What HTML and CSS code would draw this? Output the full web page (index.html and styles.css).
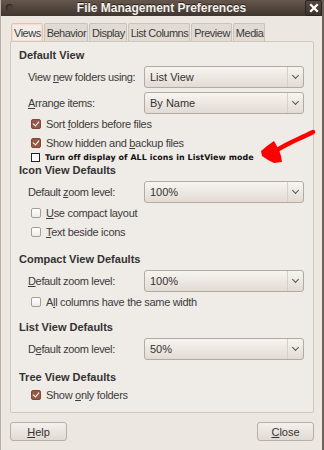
FILE: index.html
```html
<!DOCTYPE html>
<html>
<head>
  <meta charset="utf-8" />
  <title>File Management Preferences</title>
  <link rel="stylesheet" href="styles.css">
</head>
<body>
<div class="window">
  <div class="titlebar">
    <span class="menu-dot"></span>
    <span class="title">File Management Preferences</span>
    <span class="close-btn">
      <svg width="10" height="10" viewBox="0 0 10 10"><path d="M2 2 L8 8 M8 2 L2 8" stroke="#fff" stroke-width="2.2" stroke-linecap="square"/></svg>
    </span>
  </div>

  <div class="content">
    <div class="tabs">
      <div class="tab active">Views</div>
      <div class="tab">Behavior</div>
      <div class="tab">Display</div>
      <div class="tab">List Columns</div>
      <div class="tab">Preview</div>
      <div class="tab">Media</div>
    </div>

    <div class="panel">
      <h2 class="heading">Default View</h2>
      <div class="row combo-row">
        <span class="label">View <u>n</u>ew folders using:</span>
        <div class="combo"><span>List View</span><i class="combo-arrow"></i></div>
      </div>
      <div class="row combo-row gap">
        <span class="label"><u>A</u>rrange items:</span>
        <div class="combo"><span>By Name</span><i class="combo-arrow"></i></div>
      </div>
      <label class="check-row"><span class="box checked"></span><span>Sort <u>f</u>olders before files</span></label>
      <label class="check-row"><span class="box checked"></span><span>Show hidden and <u>b</u>ackup files</span></label>
      <label class="hack-row"><span class="hack-box"></span><span>Turn off display of ALL icons in ListView mode</span></label>

      <h2 class="heading h-icon">Icon View Defaults</h2>
      <div class="row combo-row">
        <span class="label">Default <u>z</u>oom level:</span>
        <div class="combo"><span>100%</span><i class="combo-arrow"></i></div>
      </div>
      <label class="check-row"><span class="box"></span><span><u>U</u>se compact layout</span></label>
      <label class="check-row"><span class="box"></span><span><u>T</u>ext beside icons</span></label>

      <h2 class="heading h-compact">Compact View Defaults</h2>
      <div class="row combo-row">
        <span class="label"><u>D</u>efault zoom level:</span>
        <div class="combo"><span>100%</span><i class="combo-arrow"></i></div>
      </div>
      <label class="check-row"><span class="box"></span><span>A<u>l</u>l columns have the same width</span></label>

      <h2 class="heading h-list">List View Defaults</h2>
      <div class="row combo-row">
        <span class="label">D<u>e</u>fault zoom level:</span>
        <div class="combo"><span>50%</span><i class="combo-arrow"></i></div>
      </div>

      <h2 class="heading h-tree">Tree View Defaults</h2>
      <label class="check-row last"><span class="box checked"></span><span>Show <u>o</u>nly folders</span></label>
    </div>

    <div class="buttons">
      <button class="btn"><u>H</u>elp</button>
      <button class="btn"><u>C</u>lose</button>
    </div>
  </div>

  <!-- hand drawn annotation -->
  <svg class="annotation" width="324" height="450" viewBox="0 0 324 450">
    <path d="M312 132 C300 138 292 141 283 146 C279 148 276 150 272 153" fill="none" stroke="#f00" stroke-width="4.5" stroke-linecap="round"/>
    <path d="M273 141 L266 146 L260 151 L261 156 L267 160 L273 163 L281 162 L280 156 L278 150 Z" fill="#f00"/>
  </svg>
</div>
</body>
</html>
```

FILE: styles.css
```css
body {
  margin: 0;
  padding: 0;
  font-family: "Liberation Sans", Arial, sans-serif;
  font-size: 11px;
  color: #3c3c3c;
}
.window {
  position: relative;
  width: 324px;
  height: 450px;
  background: #ece7e1;
  box-sizing: border-box;
  border-right: 2px solid #6a625b;
  border-left: 1px solid #b9b1a8;
  overflow: hidden;
}
.titlebar {
  height: 16px;
  background: linear-gradient(#65574c, #3f362f);
  display: flex;
  align-items: center;
  justify-content: center;
  position: relative;
}
.menu-dot {
  position: absolute;
  left: 5px;
  top: 4px;
  width: 7px;
  height: 7px;
  border-radius: 50%;
  background: #4d423a;
  box-shadow: inset 1px 1px 1px #2b231f;
}
.title {
  font-weight: bold;
  font-size: 12px;
  color: #f4f0ec;
  text-shadow: 0 -1px 0 #2a221d;
}
.close-btn {
  position: absolute;
  right: 0;
  top: 0;
  width: 15px;
  height: 14px;
  background: linear-gradient(#544840, #3a322c);
  border: 1px solid #2c2420;
  border-radius: 2px;
  display: flex;
  align-items: center;
  justify-content: center;
}
.content {
  padding: 7px 8px 0 9px;
}
.tabs {
  display: flex;
  height: 18px;
  padding-left: 1px;
}
.tab {
  height: 18px;
  line-height: 18px;
  padding: 0 1px 0 2px;
  margin-right: 1px;
  background: #e2dbd3;
  border: 1px solid #cbc3b9;
  border-bottom: none;
  border-radius: 2px 2px 0 0;
  box-sizing: border-box;
  color: #3a3a3a;
  letter-spacing: -0.5px;
}
.tab.active {
  background: #f2ede8;
  border-color: #e7c3ae;
  box-shadow: inset 0 0 0 1px #f6dccd;
}
.panel {
  background: #efebe6;
  border: 1px solid #cfc8c0;
  border-radius: 0 2px 2px 2px;
  padding: 6px 9px 8px 8px;
  height: 372px;
  box-sizing: border-box;
}
.heading {
  margin: 0;
  font-size: 11px;
  font-weight: bold;
  line-height: 14px;
  color: #333;
}
.h-icon { margin-top: 1px; }
.h-compact { margin-top: 11px; }
.h-list { margin-top: 9px; }
.h-tree { margin-top: 10px; }
.row {
  display: flex;
  align-items: center;
}
.combo-row {
  height: 22px;
  margin-top: 4px;
  padding-left: 9px;
}
.label {
  width: 116px;
  letter-spacing: -0.35px;
}
.combo {
  flex: 1;
  height: 22px;
  box-sizing: border-box;
  border: 1px solid #b3aaa1;
  border-radius: 3px;
  background: linear-gradient(#f7f4f1, #ebe5df 60%, #e2dbd4);
  display: flex;
  align-items: center;
  padding-left: 5px;
  color: #333;
}
.combo span {
  flex: 1;
}
.combo-arrow {
  width: 15px;
  height: 20px;
  border-left: 1px solid #d8d0c8;
  position: relative;
}
.combo-arrow::after {
  content: "";
  position: absolute;
  left: 5px;
  top: 6px;
  width: 4px;
  height: 4px;
  border-right: 1px solid #555;
  border-bottom: 1px solid #555;
  transform: rotate(45deg);
}
.check-row {
  display: flex;
  align-items: center;
  height: 19px;
  padding-left: 12px;
  letter-spacing: -0.3px;
}
.check-row.last {
  margin-top: 1px;
}
.box {
  width: 8px;
  height: 8px;
  border: 1px solid #a59d95;
  border-radius: 2px;
  background: linear-gradient(#fff, #eeeae6);
  margin-right: 5px;
  position: relative;
  flex-shrink: 0;
}
.box.checked {
  background: #955844;
  border-color: #7d4836;
}
.box.checked::after {
  content: "";
  position: absolute;
  left: 2px;
  top: 0;
  width: 3px;
  height: 5px;
  border-right: 1.5px solid #fff;
  border-bottom: 1.5px solid #fff;
  transform: rotate(40deg);
}
.hack-row {
  display: flex;
  align-items: center;
  height: 10px;
  padding-left: 12px;
  font-family: "DejaVu Sans", sans-serif;
  font-weight: bold;
  font-size: 7.9px;
  color: #111;
  letter-spacing: 0.1px;
}
.hack-box {
  width: 7px;
  height: 7px;
  border: 1px solid #222;
  background: #fff;
  margin-right: 5px;
  flex-shrink: 0;
}
.buttons {
  display: flex;
  justify-content: space-between;
  margin-top: 9px;
  padding-right: 0;
}
.btn {
  width: 57px;
  height: 19px;
  font-family: "Liberation Sans", Arial, sans-serif;
  font-size: 11px;
  color: #333;
  border: 1px solid #b7aea5;
  border-radius: 3px;
  background: linear-gradient(#f4f0ec, #e1dad3);
  padding: 0;
}
.annotation {
  position: absolute;
  left: 0;
  top: 0;
  pointer-events: none;
}
```
